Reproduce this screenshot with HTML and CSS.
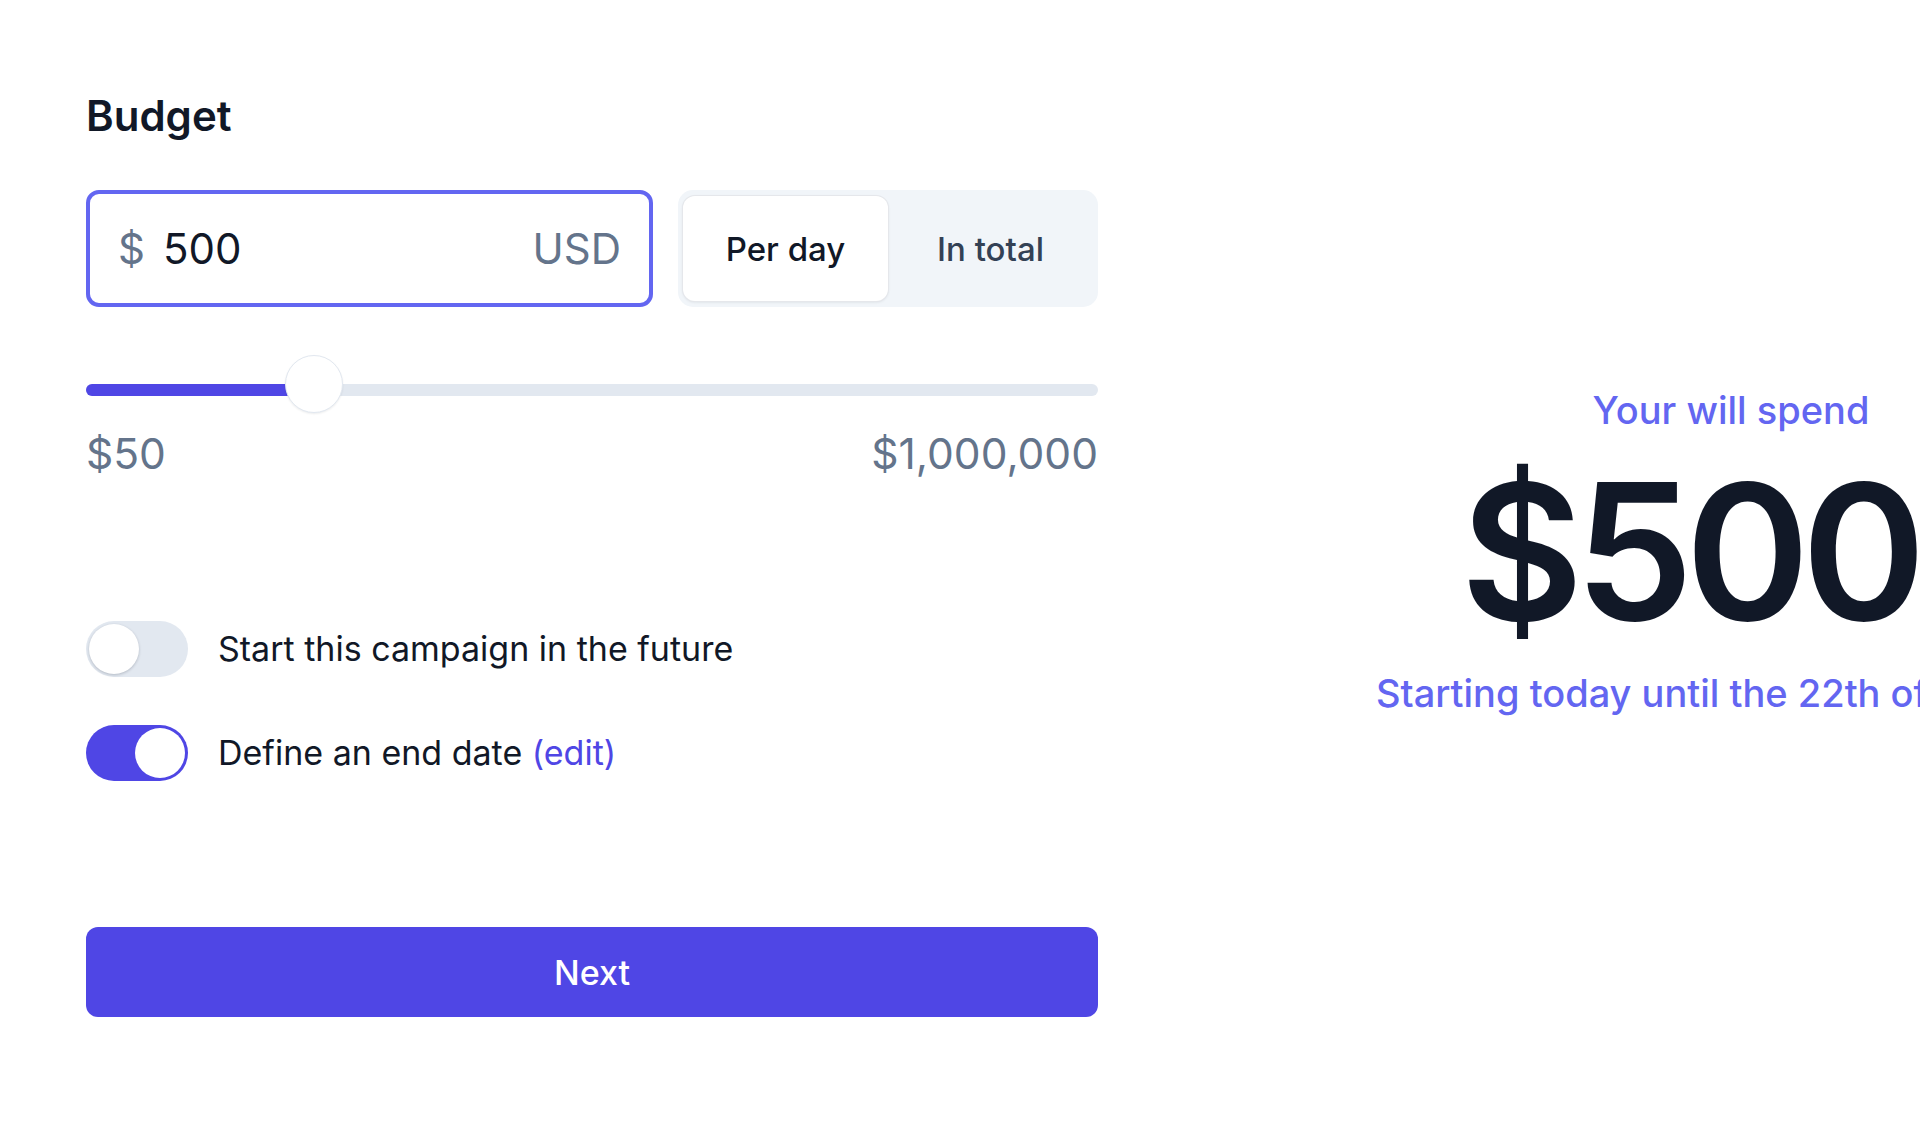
FILE: index.html
```html
<!DOCTYPE html>
<html lang="en">
<head>
<meta charset="utf-8">
<title>Budget</title>
<link rel="stylesheet" href="styles.css">
</head>
<body>
<main class="page">
  <section class="form">
    <h1 class="title">Budget</h1>
    <div class="budget-row">
      <label class="amount">
        <span class="amount-sign">$</span>
        <span class="amount-value">500</span>
        <span class="amount-currency">USD</span>
      </label>
      <div class="segmented">
        <button class="segment segment-active" type="button">Per day</button>
        <button class="segment" type="button">In total</button>
      </div>
    </div>
    <div class="slider">
      <div class="slider-fill"></div>
      <div class="slider-thumb"></div>
    </div>
    <div class="slider-labels">
      <span>$50</span>
      <span>$1,000,000</span>
    </div>
    <div class="switches">
      <div class="switch-row">
        <span class="switch"><span class="switch-knob"></span></span>
        <span class="switch-label">Start this campaign in the future</span>
      </div>
      <div class="switch-row">
        <span class="switch switch-on"><span class="switch-knob"></span></span>
        <span class="switch-label">Define an end date <a class="edit-link" href="#">(edit)</a></span>
      </div>
    </div>
    <button class="next" type="button">Next</button>
  </section>
  <aside class="summary">
    <p class="summary-lead">Your will spend</p>
    <p class="summary-amount">$500</p>
    <p class="summary-sub">Starting today until the 22th of January</p>
  </aside>
</main>
</body>
</html>
```
FILE: styles.css
```css
html, body {
  margin: 0;
  padding: 0;
  background: #ffffff;
  overflow: hidden;
}

body {
  font-family: Inter, "Noto Sans", "Liberation Sans", sans-serif;
  color: #111827;
}

.page {
  display: grid;
  grid-template-columns: 1012px 1100px;
  column-gap: 83px;
  padding: 91px 0 0 86px;
  width: max-content;
}

.form {
  display: flex;
  flex-direction: column;
}

.title {
  margin: 0;
  font-size: 42px;
  line-height: 50px;
  font-weight: 600;
  color: #111827;
}

.budget-row {
  display: flex;
  gap: 25px;
  margin-top: 49px;
  height: 117px;
}

.amount {
  box-sizing: border-box;
  width: 567px;
  height: 117px;
  border: 4px solid #6366f1;
  border-radius: 13px;
  padding: 0 28px;
  display: flex;
  align-items: center;
  font-size: 42px;
}

.amount-sign {
  color: #64748b;
  margin-right: 18px;
}

.amount-value {
  color: #111827;
  flex: 1;
}

.amount-currency {
  color: #64748b;
}

.segmented {
  box-sizing: border-box;
  width: 420px;
  height: 117px;
  background: #f1f5f9;
  border-radius: 15px;
  padding: 6px 5px;
  display: grid;
  grid-template-columns: 1fr 1fr;
}

.segment {
  border: 0;
  background: transparent;
  font-family: inherit;
  font-size: 33px;
  font-weight: 500;
  color: #334155;
  border-radius: 12px;
  cursor: pointer;
}

.segment-active {
  background: #ffffff;
  color: #111827;
  box-shadow: 0 0 0 1px #e5e7eb, 0 1px 3px rgba(15, 23, 42, 0.12);
}

.slider {
  position: relative;
  margin-top: 77px;
  height: 12px;
  border-radius: 6px;
  background: #e2e8f0;
}

.slider-fill {
  width: 206px;
  height: 100%;
  border-radius: 6px 0 0 6px;
  background: #4f46e5;
}

.slider-thumb {
  position: absolute;
  left: 199px;
  top: -29px;
  box-sizing: border-box;
  width: 58px;
  height: 58px;
  border-radius: 50%;
  background: #ffffff;
  border: 1px solid #e2e8f0;
  box-shadow: 0 1px 2px rgba(15, 23, 42, 0.08);
}

.slider-labels {
  display: flex;
  justify-content: space-between;
  margin-top: 32px;
  font-size: 42.5px;
  line-height: 52px;
  color: #64748b;
}

.switches {
  display: flex;
  flex-direction: column;
  gap: 48px;
  margin-top: 141px;
}

.switch-row {
  display: flex;
  align-items: center;
  gap: 30px;
}

.switch {
  position: relative;
  flex: none;
  width: 102px;
  height: 56px;
  border-radius: 28px;
  background: #e2e8f0;
}

.switch-knob {
  position: absolute;
  top: 3px;
  left: 3px;
  width: 50px;
  height: 50px;
  border-radius: 50%;
  background: #ffffff;
  box-shadow: 0 1px 3px rgba(15, 23, 42, 0.22);
}

.switch-on {
  background: #4f46e5;
}

.switch-on .switch-knob {
  left: auto;
  right: 3px;
  box-shadow: none;
}

.switch-label {
  font-size: 34px;
  line-height: 42px;
  color: #111827;
}

.edit-link {
  color: #4f46e5;
  text-decoration: none;
}

.next {
  margin-top: 146px;
  height: 90px;
  border: 0;
  border-radius: 12px;
  background: #4f46e5;
  color: #ffffff;
  font-family: inherit;
  font-size: 34px;
  font-weight: 500;
  cursor: pointer;
}

.summary {
  padding-top: 297px;
  text-align: center;
  white-space: nowrap;
}

.summary p {
  margin: 0;
}

.summary-lead {
  font-size: 38px;
  line-height: 44px;
  font-weight: 500;
  color: #6366f1;
}

.summary-amount {
  margin-top: 25px !important;
  padding-right: 84px;
  font-size: 189px;
  line-height: 190px;
  font-weight: 600;
  letter-spacing: -0.045em;
  color: #111827;
}

.summary-sub {
  margin-top: 24px !important;
  font-size: 38px;
  line-height: 44px;
  font-weight: 500;
  color: #6366f1;
}
```
